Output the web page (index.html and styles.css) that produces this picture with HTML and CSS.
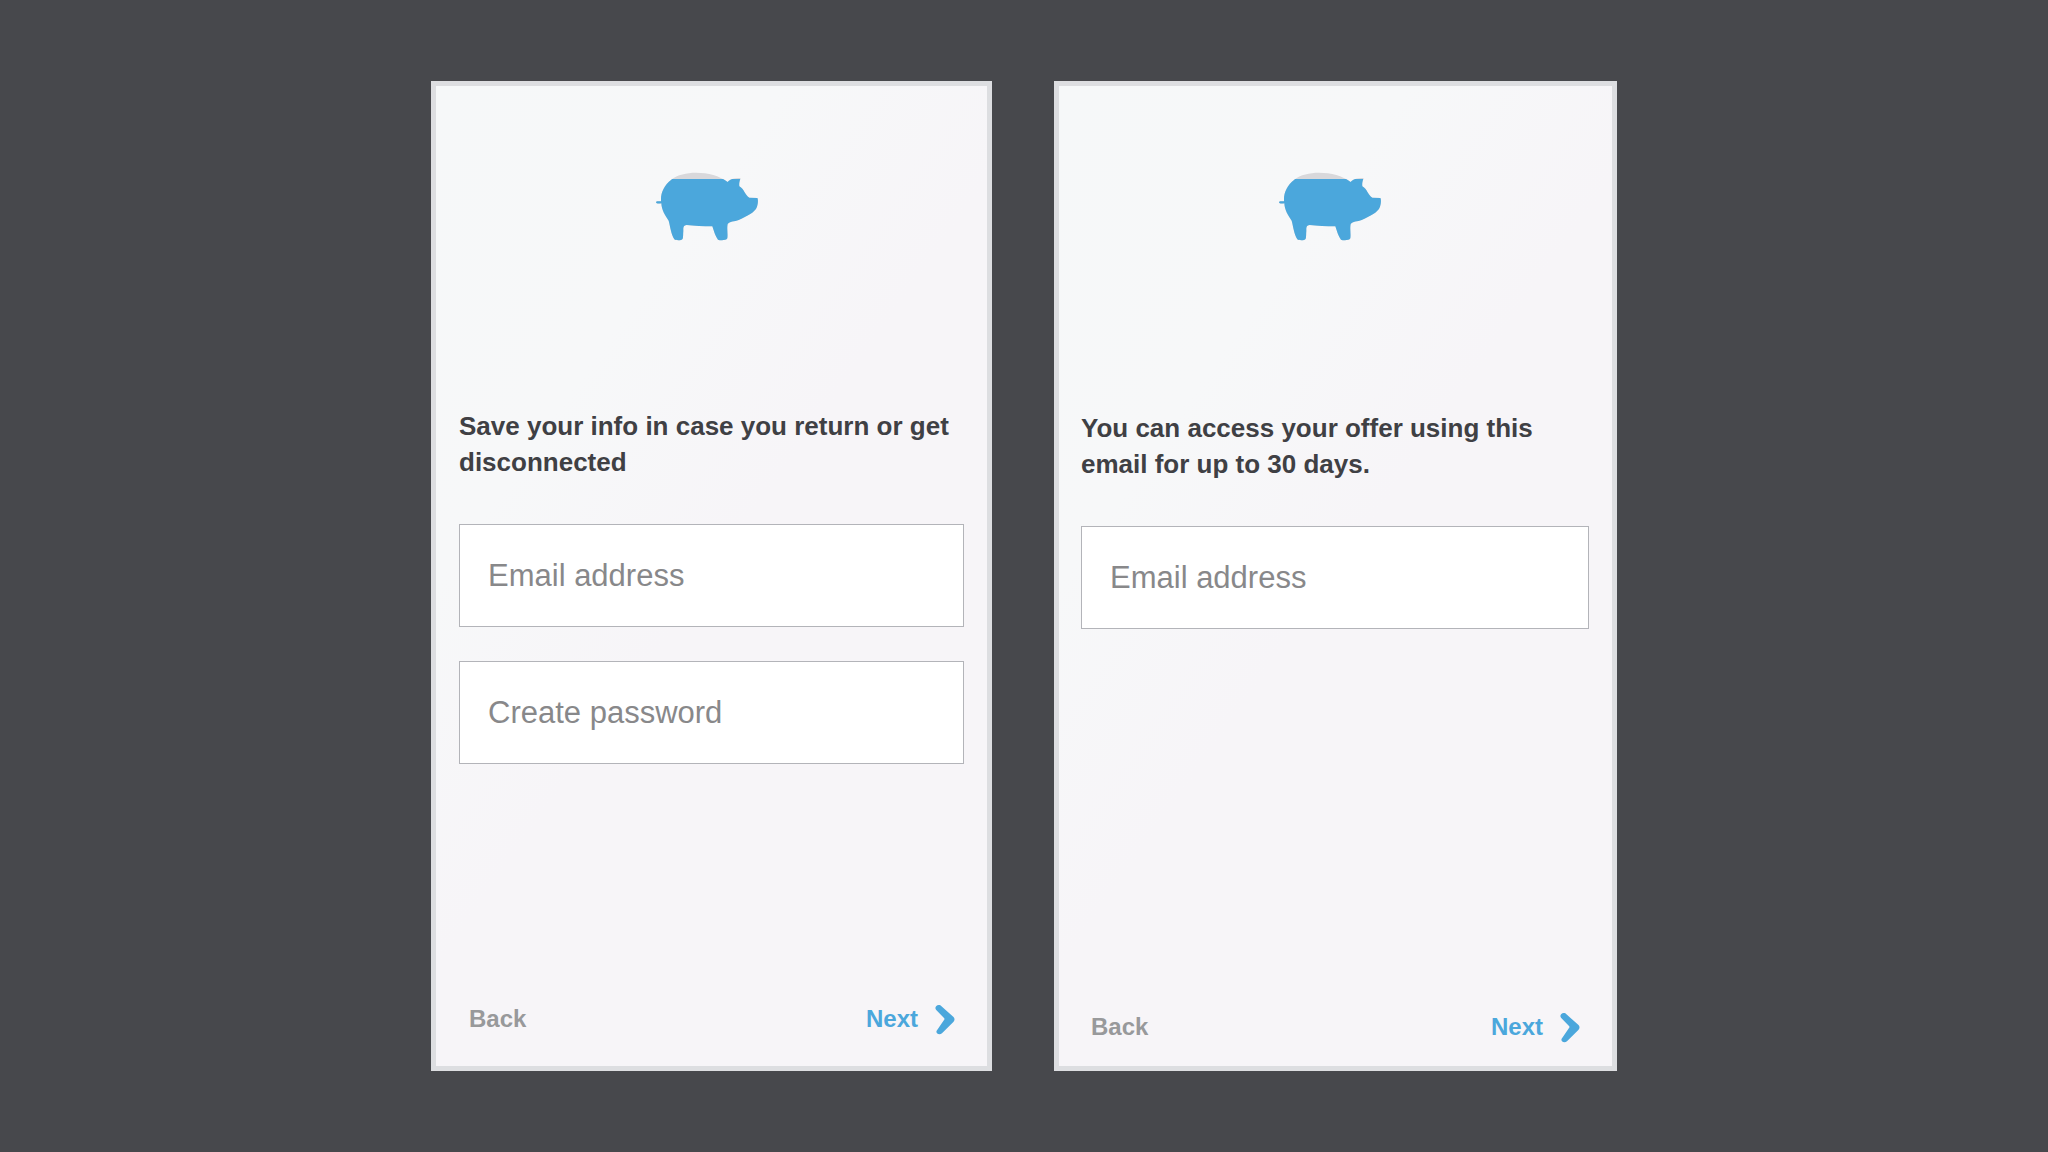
FILE: index.html
```html
<!DOCTYPE html>
<html lang="en">
<head>
<meta charset="utf-8">
<meta name="viewport" content="width=device-width, initial-scale=1">
<title>Save your info</title>
<link rel="stylesheet" href="styles.css">
</head>
<body>
<svg class="sprite" width="0" height="0" aria-hidden="true">
  <defs>
    <path id="pig-shape" d="M63 122C62 98 72 76 94 59C112 44 140 38 168 38C205 38 238 47 263 66C270 58 280 54 302 54C298 64 297 71 298 79C313 87 314 105 328 113L352 114C355 118 354 132 351 140C345 158 318 169 296 180C284 185 268 184 263 192C260 206 264 222 262 235C259 242 241 242 234 239C225 228 222 212 217 199C190 199 162 197 140 195C129 196 130 205 130 212C129 222 130 230 128 236C125 242 108 242 103 238C93 222 91 200 86 182C75 166 65 150 64 130C59 131 48 132 48 127C48 122 58 124 63 124Z"/>
    <clipPath id="pig-fill"><rect x="40" y="57" width="330" height="200"/></clipPath>
    <symbol id="pig" viewBox="48 36 309 207">
      <use href="#pig-shape" fill="#d8d8db"/>
      <use href="#pig-shape" fill="#4ba7dc" clip-path="url(#pig-fill)"/>
    </symbol>
    <symbol id="chevron" viewBox="256 42 60 93">
      <path fill="#4ba7dc" d="M259 59C253 51 263 41 272 46L309 79C316 84 316 91 311 96L277 130C269 137 257 131 261 122L283 90C285 88 285 86 283 84Z"/>
    </symbol>
  </defs>
</svg>
<main class="screens">
  <form class="card">
    <div class="logo"><svg class="pig" role="img" aria-label="Piggy bank"><use href="#pig"/></svg></div>
    <h2 class="title">Save your info in case you return or get disconnected</h2>
    <div class="fields">
      <input class="field" type="email" placeholder="Email address" aria-label="Email address">
      <input class="field" type="password" placeholder="Create password" aria-label="Create password">
    </div>
    <div class="actions">
      <button class="action back" type="button">Back</button>
      <button class="action next" type="button">Next <svg class="chevron" aria-hidden="true"><use href="#chevron"/></svg></button>
    </div>
  </form>
  <form class="card card-offer">
    <div class="logo"><svg class="pig" role="img" aria-label="Piggy bank"><use href="#pig"/></svg></div>
    <h2 class="title">You can access your offer using this email for up to 30 days.</h2>
    <div class="fields">
      <input class="field" type="email" placeholder="Email address" aria-label="Email address">
    </div>
    <div class="actions">
      <button class="action back" type="button">Back</button>
      <button class="action next" type="button">Next <svg class="chevron" aria-hidden="true"><use href="#chevron"/></svg></button>
    </div>
  </form>
</main>
</body>
</html>
```
FILE: styles.css
```css
* {
  box-sizing: border-box;
}

body {
  margin: 0;
  background: #47484c;
  color: #3f4044;
  font-family: "Liberation Sans", Arial, Helvetica, sans-serif;
}

.sprite {
  position: absolute;
}

.screens {
  display: grid;
  grid-template-columns: 561fr 563fr;
  gap: 62px;
  max-width: 1218px;
  min-height: 100vh;
  margin: 0 auto;
  padding: 81px 16px;
}

.card {
  display: flex;
  flex-direction: column;
  padding: 86px 23px 29px;
  border: 5px solid #dddee1;
  background: linear-gradient(125deg, #f6f8f9 0%, #f7f8f9 28%, #f7f5f8 50%);
}

.card-offer {
  padding: 86px 23px 21px 22px;
}

.logo {
  display: flex;
  justify-content: center;
  padding-right: 9px;
  margin-bottom: 167px;
}

.card-offer .logo {
  margin-bottom: 169px;
}

.pig {
  width: 103px;
  height: 69px;
}

.title {
  margin: 0 0 44px;
  font-size: 26px;
  line-height: 36px;
}

.fields {
  display: grid;
  gap: 34px;
}

.field {
  width: 100%;
  height: 103px;
  padding: 0 28px;
  border: 1px solid #b3b4b9;
  border-radius: 0;
  background: #fff;
  color: #3f4044;
  font: 31px "Liberation Sans", Arial, Helvetica, sans-serif;
}

.field::placeholder {
  color: #88888a;
  opacity: 1;
}

.actions {
  display: flex;
  justify-content: space-between;
  align-items: center;
  margin-top: auto;
  padding: 0 9px 0 10px;
}

.action {
  display: flex;
  align-items: center;
  gap: 17px;
  padding: 0;
  border: 0;
  background: none;
  font: bold 24px/36px "Liberation Sans", Arial, Helvetica, sans-serif;
}

.back {
  color: #98999b;
}

.next {
  color: #4ba7dc;
}

.chevron {
  width: 20px;
  height: 31px;
}

@media (max-width: 900px) {
  .screens {
    grid-template-columns: 1fr;
  }
}
```
